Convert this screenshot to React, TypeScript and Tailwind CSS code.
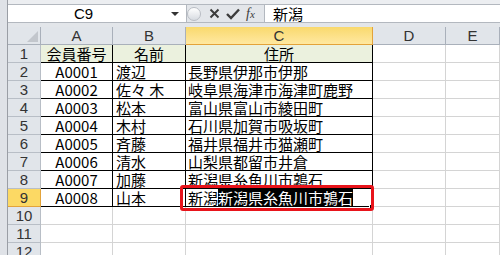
import React from 'react';

const cols = [
  { key: 'A', w: 'w-[72px]' },
  { key: 'B', w: 'w-[73px]' },
  { key: 'C', w: 'w-[187px]' },
  { key: 'D', w: 'w-[73px]' },
  { key: 'E', w: 'flex-1' },
];

const rows: string[][] = [
  ['会員番号', '名前', '住所'],
  ['A0001', '渡辺', '長野県伊那市伊那'],
  ['A0002', '佐々木', '岐阜県海津市海津町鹿野'],
  ['A0003', '松本', '富山県富山市綾田町'],
  ['A0004', '木村', '石川県加賀市吸坂町'],
  ['A0005', '斉藤', '福井県福井市猫瀬町'],
  ['A0006', '清水', '山梨県都留市井倉'],
  ['A0007', '加藤', '新潟県糸魚川市鶉石'],
  ['A0008', '山本', ''],
];

const font = { fontFamily: '"Noto Sans CJK JP", "Liberation Sans", sans-serif' };
const latin = { fontFamily: '"Liberation Sans", sans-serif' };

function FormulaBar() {
  return (
    <div className="flex h-[27px] bg-[#e3e6ea]">
      <div className="w-[8px] shrink-0 border-r border-[#9a9ea5] bg-[#dfe2e7]" />
      <div className="flex flex-1 flex-col">
        <div className="h-[5px] border-b border-[#b3b8bf] bg-[#eceef1]" />
        <div className="flex h-[17px]">
          {/* name box */}
          <div className="flex w-[179px] shrink-0 items-center border-r border-[#b3b8bf] bg-white">
            <span className="flex-1 pl-[2px] text-center text-[15px] leading-[16px] text-black" style={latin}>
              C9
            </span>
            <span className="mr-[7px] ml-[14px] h-0 w-0 border-x-[4px] border-t-[4px] border-x-transparent border-t-[#333]" />
          </div>
          {/* splitter knob */}
          <div className="flex w-[14px] shrink-0 items-center justify-center">
            <div className="h-[14px] w-[14px] rounded-full border border-[#b9bdc4] bg-gradient-to-b from-white to-[#d7dbe1]" />
          </div>
          <div className="flex w-[63px] shrink-0 items-center gap-[6px] pl-[8px] text-[#3c3c3c]">
            <svg width="11" height="11" viewBox="0 0 11 11">
              <path d="M1.5 1.5 L9.5 9.5 M9.5 1.5 L1.5 9.5" stroke="#3c3c3c" strokeWidth="2" />
            </svg>
            <svg width="14" height="12" viewBox="0 0 14 12">
              <path d="M1 6 L5 10 L13 1.5" fill="none" stroke="#3c3c3c" strokeWidth="2.4" />
            </svg>
            <span className="text-[14px] italic leading-none" style={{ fontFamily: '"Liberation Serif", serif' }}>
              f<span className="text-[11px]">x</span>
            </span>
          </div>
          <div
            className="flex flex-1 items-center border-l border-[#b3b8bf] bg-white pl-[8px] text-[15px] leading-[16px] text-black"
            style={font}
          >
            新潟
          </div>
        </div>
        <div className="h-[5px] border-t border-[#b3b8bf] bg-[#e3e6ea]" />
      </div>
    </div>
  );
}

function Sheet() {
  return (
    <div className="flex">
      <div className="w-[8px] shrink-0 border-r border-[#9a9ea5] bg-[#dfe2e7]" />
      <div className="flex flex-1 flex-col">
        {/* column headers */}
        <div className="flex h-[18px]">
          <div className="flex w-[33px] shrink-0 items-end justify-end border-r border-b border-[#a9b0ba] bg-[#e1e5ea] p-[2px]">
            <svg width="11" height="11" viewBox="0 0 11 11">
              <path d="M11 0 L11 11 L0 11 Z" fill="#c2c6cc" />
            </svg>
          </div>
          {cols.map((c) => (
            <div
              key={c.key}
              className={`${c.w} flex shrink-0 items-center justify-center text-[15px] leading-[17px] text-[#333] ${
                c.key === 'C'
                  ? 'border-r border-b border-[#e3a33a] bg-gradient-to-b from-[#f9d96c] to-[#ffe8a0]'
                  : 'border-r border-b border-[#a9b0ba] bg-[#e1e5ea]'
              }`}
              style={latin}
            >
              {c.key}
            </div>
          ))}
        </div>
        {Array.from({ length: 12 }, (_, i) => i + 1).map((r) => {
          const data = rows[r - 1];
          return (
            <div key={r} className="flex h-[18px]">
              <div
                className={`flex w-[33px] shrink-0 items-center justify-center text-[15px] leading-[17px] text-[#333] ${
                  r === 9
                    ? 'border-r border-b border-[#e3a33a] bg-[#fcd964]'
                    : 'border-r border-b border-[#b8bec6] bg-[#e1e5ea]'
                }`}
                style={latin}
              >
                {r}
              </div>
              {cols.map((c, ci) => {
                const inTable = data && ci < 3;
                const text = inTable ? data[ci] : '';
                const align =
                  r === 1 || ci === 0
                    ? 'justify-center'
                    : ci === 1
                      ? 'justify-start pl-[3px]'
                      : 'justify-start pl-[2px]';
                return (
                  <div
                    key={c.key}
                    className={`${c.w} flex shrink-0 items-center whitespace-nowrap text-[15px] leading-[17px] text-black ${align} ${
                      inTable ? 'border-r border-b border-black' : 'border-r border-b border-[#d4d4d4]'
                    } ${r === 1 && inTable ? 'bg-[#ebf1de]' : 'bg-white'}`}
                    style={font}
                  >
                    {r === 9 && ci === 2 ? (
                      <span className="underline decoration-1 underline-offset-2">
                        新潟<span className="bg-black text-white">新潟県糸魚川市鶉石</span>
                      </span>
                    ) : ci === 1 && text === '佐々木' ? (
                      <span>佐々&nbsp;木</span>
                    ) : (
                      text
                    )}
                  </div>
                );
              })}
            </div>
          );
        })}
      </div>
    </div>
  );
}

export default function App() {
  return (
    <div className="relative h-[255px] w-[500px] overflow-hidden bg-white">
      <FormulaBar />
      <Sheet />
      {/* active cell fill handle */}
      <div className="absolute left-[369px] top-[204px] h-[5px] w-[5px] border border-white bg-black" />
      {/* red annotation frame */}
      <div className="absolute left-[180px] top-[185px] h-[26px] w-[194px] rounded-[3px] border-[3px] border-[#e8141b]" />
    </div>
  );
}
